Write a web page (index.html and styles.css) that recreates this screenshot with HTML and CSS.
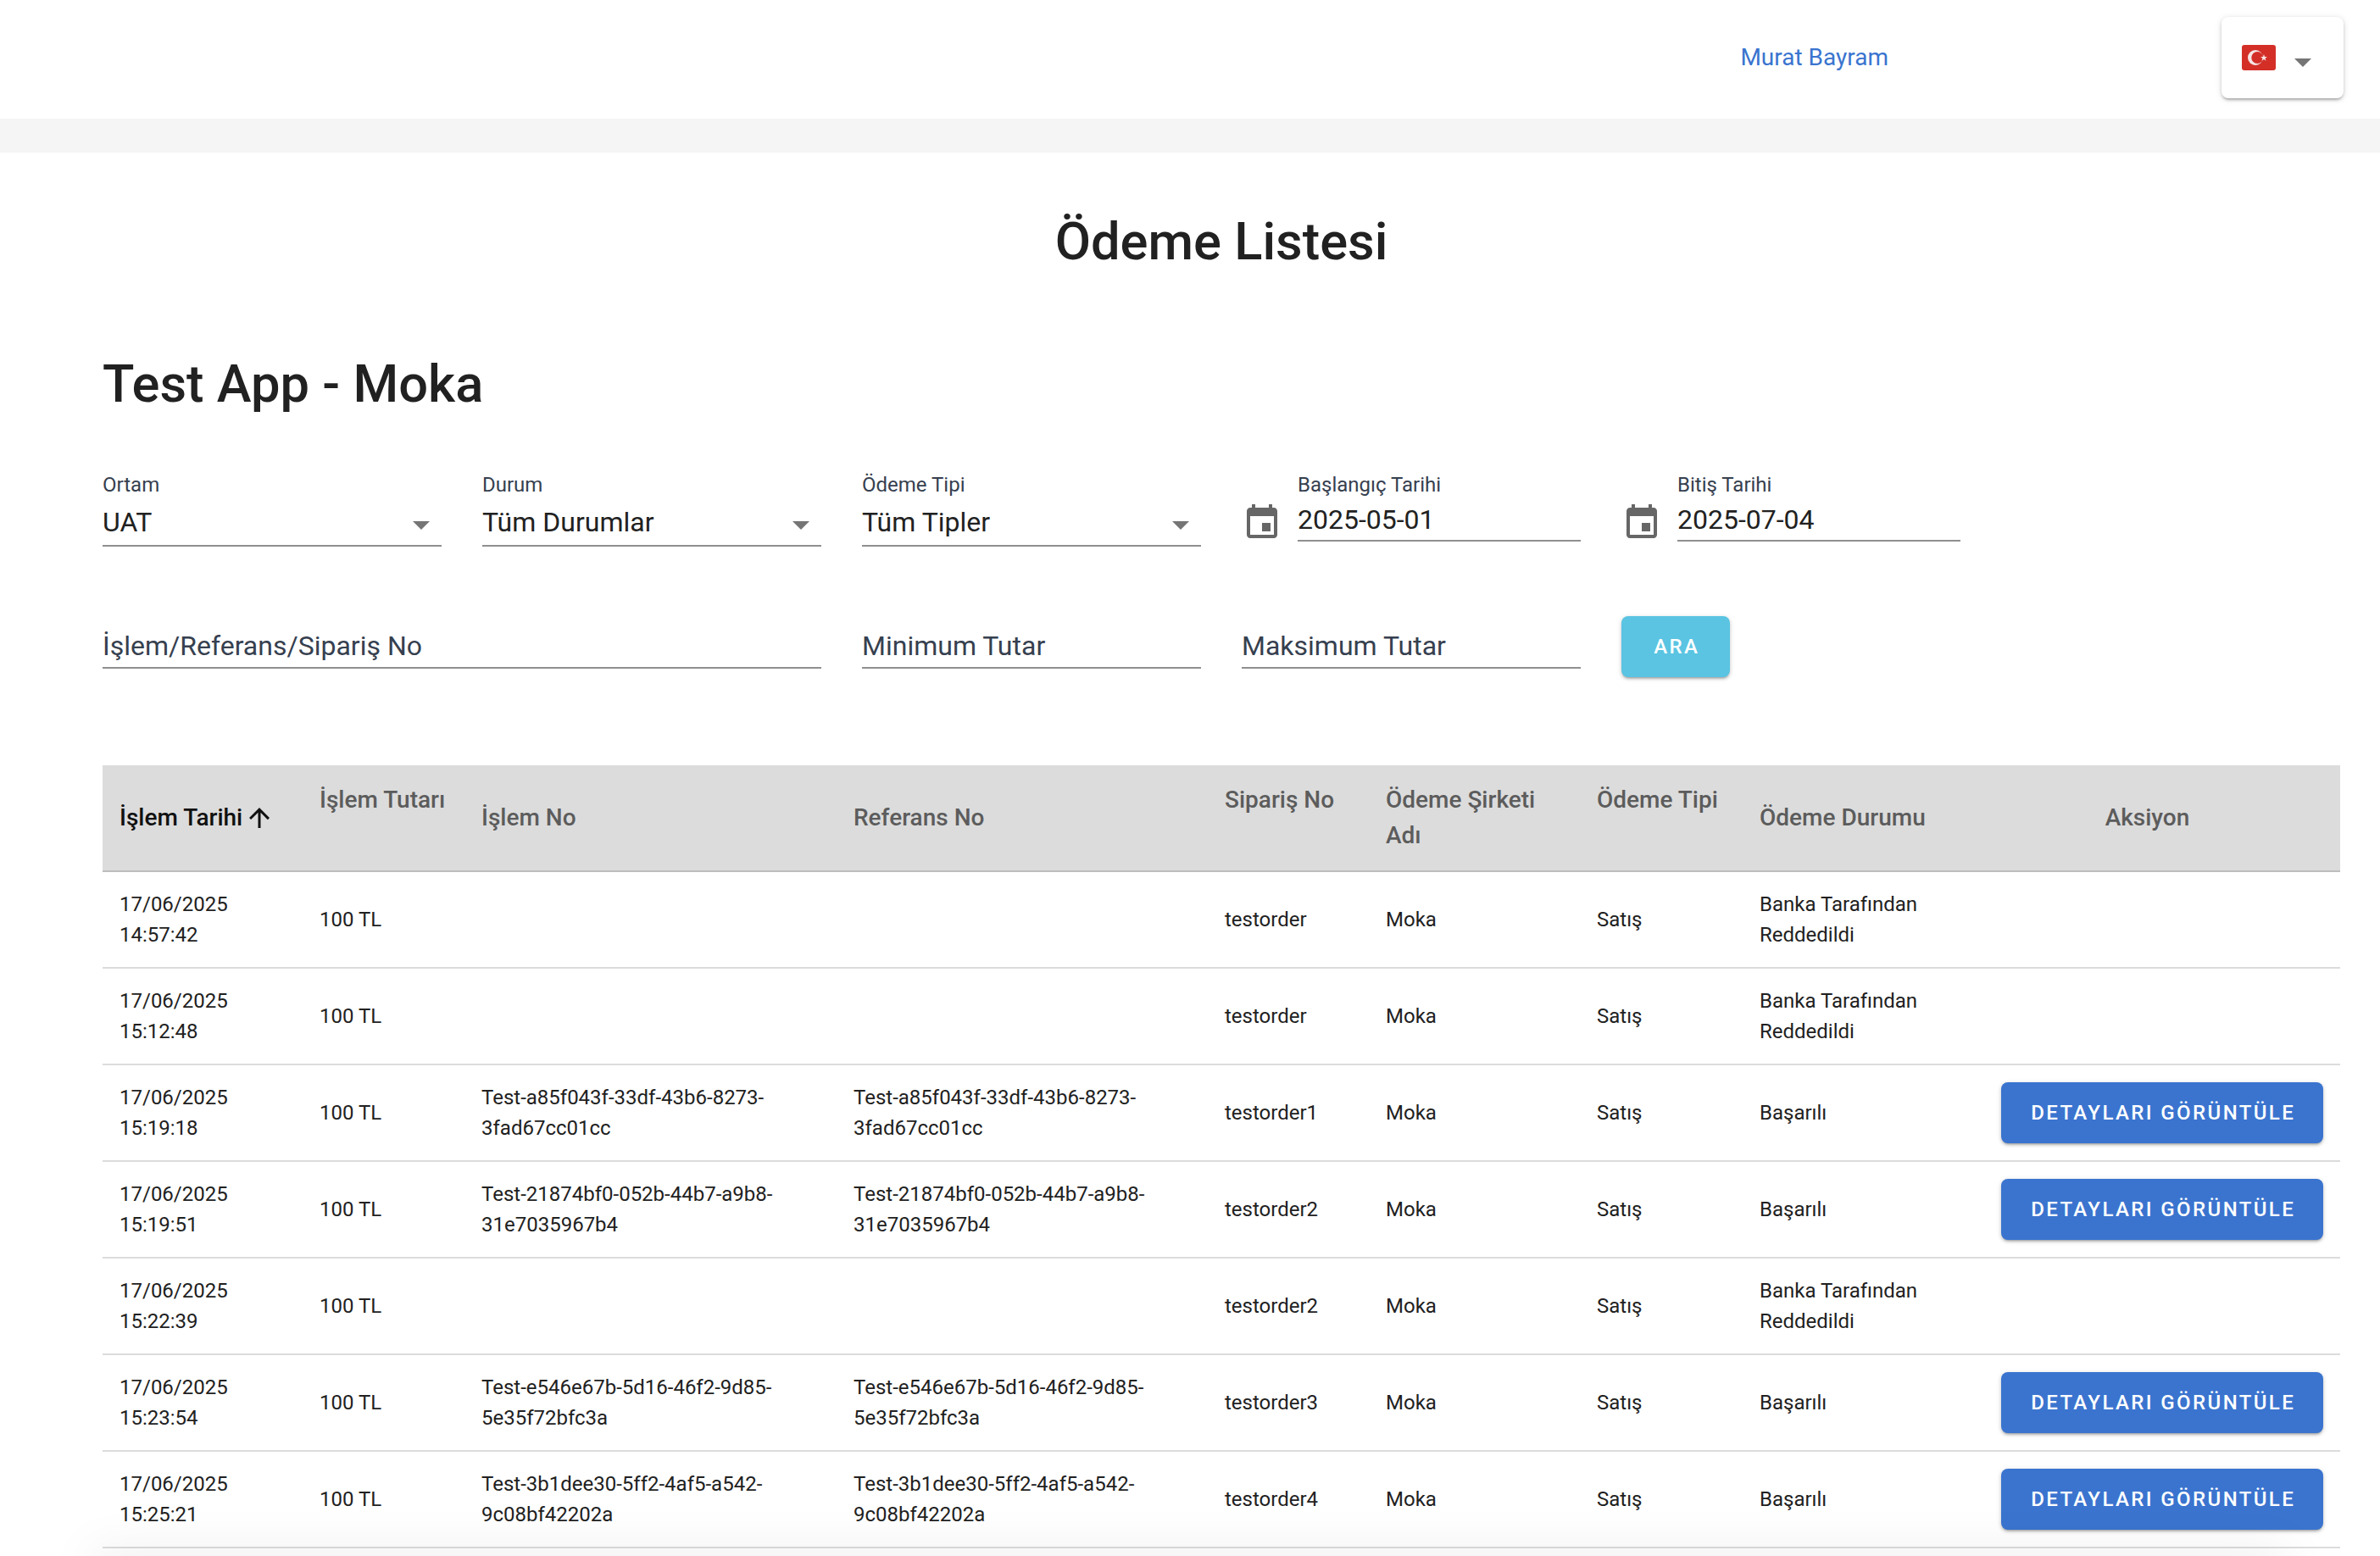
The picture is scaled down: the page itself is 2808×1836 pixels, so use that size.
FILE: index.html
```html
<!DOCTYPE html>
<html lang="tr">
<head>
<meta charset="utf-8">
<title>Ödeme Listesi</title>
<link rel="stylesheet" href="styles.css">
</head>
<body>
<header class="topbar">
  <a class="user-link" href="#">Murat Bayram</a>
  <div class="lang-select">
    <svg class="flag" viewBox="0 0 40 30" aria-hidden="true">
      <rect width="40" height="30" rx="3" fill="#d32f27"/>
      <circle cx="16" cy="15" r="9" fill="#f6e6e4"/>
      <circle cx="18.3" cy="15" r="7" fill="#d32f27"/>
      <polygon points="26,11 27,14 30,14 27.6,15.8 28.5,18.8 26,17 23.5,18.8 24.4,15.8 22,14 25,14" fill="#f6e6e4"/>
    </svg>
    <span class="caret"></span>
  </div>
</header>
<div class="band"></div>
<main class="content">
  <h1 class="page-title">Ödeme Listesi</h1>
  <h2 class="app-title">Test App - Moka</h2>
  <form class="filters">
    <div class="field select"><label>Ortam</label><div class="value">UAT<span class="caret"></span></div></div>
    <div class="field select"><label>Durum</label><div class="value">Tüm Durumlar<span class="caret"></span></div></div>
    <div class="field select"><label>Ödeme Tipi</label><div class="value">Tüm Tipler<span class="caret"></span></div></div>
    <div class="date-field">
      <svg class="cal" viewBox="0 0 24 24" aria-hidden="true"><path d="M17 12h-5v5h5v-5zM16 1v2H8V1H6v2H5c-1.11 0-1.99.9-1.99 2L3 19c0 1.1.89 2 2 2h14c1.1 0 2-.9 2-2V5c0-1.1-.9-2-2-2h-1V1h-2zm3 18H5V8h14v11z"/></svg>
      <div class="field date"><label>Başlangıç Tarihi</label><div class="value">2025-05-01</div></div>
    </div>
    <div class="date-field">
      <svg class="cal" viewBox="0 0 24 24" aria-hidden="true"><path d="M17 12h-5v5h5v-5zM16 1v2H8V1H6v2H5c-1.11 0-1.99.9-1.99 2L3 19c0 1.1.89 2 2 2h14c1.1 0 2-.9 2-2V5c0-1.1-.9-2-2-2h-1V1h-2zm3 18H5V8h14v11z"/></svg>
      <div class="field date"><label>Bitiş Tarihi</label><div class="value">2025-07-04</div></div>
    </div>
    <div class="field text wide"><div class="value placeholder">İşlem/Referans/Sipariş No</div></div>
    <div class="field text"><div class="value placeholder">Minimum Tutar</div></div>
    <div class="field text"><div class="value placeholder">Maksimum Tutar</div></div>
    <div class="search-cell"><button class="btn search" type="button">ARA</button></div>
  </form>
  <table class="grid">
    <colgroup>
      <col class="c1"><col class="c2"><col class="c3"><col class="c4"><col class="c5"><col class="c6"><col class="c7"><col class="c8"><col class="c9">
    </colgroup>
    <thead>
      <tr>
        <th class="sorted">İşlem Tarihi<svg class="arrow" viewBox="0 0 24 24" aria-hidden="true"><path d="M4 12l1.41 1.41L11 7.83V20h2V7.83l5.58 5.59L20 12l-8-8-8 8z"/></svg></th>
        <th class="top">İşlem Tutarı</th>
        <th>İşlem No</th>
        <th>Referans No</th>
        <th class="top">Sipariş No</th>
        <th class="top">Ödeme Şirketi Adı</th>
        <th class="top">Ödeme Tipi</th>
        <th>Ödeme Durumu</th>
        <th class="center">Aksiyon</th>
      </tr>
    </thead>
    <tbody>
      <tr><td>17/06/2025 14:57:42</td><td>100 TL</td><td></td><td></td><td>testorder</td><td>Moka</td><td>Satış</td><td>Banka Tarafından Reddedildi</td><td></td></tr>
      <tr><td>17/06/2025 15:12:48</td><td>100 TL</td><td></td><td></td><td>testorder</td><td>Moka</td><td>Satış</td><td>Banka Tarafından Reddedildi</td><td></td></tr>
      <tr><td>17/06/2025 15:19:18</td><td>100 TL</td><td>Test-a85f043f-33df-43b6-8273-3fad67cc01cc</td><td>Test-a85f043f-33df-43b6-8273-3fad67cc01cc</td><td>testorder1</td><td>Moka</td><td>Satış</td><td>Başarılı</td><td class="action"><button class="btn detail" type="button">DETAYLARI GÖRÜNTÜLE</button></td></tr>
      <tr><td>17/06/2025 15:19:51</td><td>100 TL</td><td>Test-21874bf0-052b-44b7-a9b8-31e7035967b4</td><td>Test-21874bf0-052b-44b7-a9b8-31e7035967b4</td><td>testorder2</td><td>Moka</td><td>Satış</td><td>Başarılı</td><td class="action"><button class="btn detail" type="button">DETAYLARI GÖRÜNTÜLE</button></td></tr>
      <tr><td>17/06/2025 15:22:39</td><td>100 TL</td><td></td><td></td><td>testorder2</td><td>Moka</td><td>Satış</td><td>Banka Tarafından Reddedildi</td><td></td></tr>
      <tr><td>17/06/2025 15:23:54</td><td>100 TL</td><td>Test-e546e67b-5d16-46f2-9d85-5e35f72bfc3a</td><td>Test-e546e67b-5d16-46f2-9d85-5e35f72bfc3a</td><td>testorder3</td><td>Moka</td><td>Satış</td><td>Başarılı</td><td class="action"><button class="btn detail" type="button">DETAYLARI GÖRÜNTÜLE</button></td></tr>
      <tr><td>17/06/2025 15:25:21</td><td>100 TL</td><td>Test-3b1dee30-5ff2-4af5-a542-9c08bf42202a</td><td>Test-3b1dee30-5ff2-4af5-a542-9c08bf42202a</td><td>testorder4</td><td>Moka</td><td>Satış</td><td>Başarılı</td><td class="action"><button class="btn detail" type="button">DETAYLARI GÖRÜNTÜLE</button></td></tr>
    </tbody>
  </table>
</main>
<div class="bottom-shade"></div>
</body>
</html>
```
FILE: styles.css
```css
* { box-sizing: border-box; }
html, body { height: 100%; }
body {
  margin: 0;
  height: 1836px;
  overflow: hidden;
  background: #fff;
  color: #212121;
  font-family: Roboto, "Noto Sans", sans-serif;
}
.topbar {
  height: 140px;
  display: flex;
  align-items: center;
  justify-content: flex-end;
  padding-right: 43px;
  gap: 393px;
}
.user-link {
  color: #3a74cf;
  font-size: 28px;
  margin-bottom: 5px;
  text-decoration: none;
}
.lang-select {
  width: 144px;
  height: 96px;
  margin-top: -4px;
  display: flex;
  align-items: center;
  padding-left: 24px;
  gap: 22px;
  background: #fff;
  border-radius: 8px;
  box-shadow: 0 3px 3px -2px rgba(0,0,0,.3), 0 2px 4px rgba(0,0,0,.14), 0 1px 8px rgba(0,0,0,.1);
}
.flag { width: 40px; height: 30px; }
.caret {
  display: inline-block;
  width: 0;
  height: 0;
  border-left: 10px solid transparent;
  border-right: 10px solid transparent;
  border-top: 10px solid #757575;
}
.lang-select .caret { margin-top: 12px; }
.band { height: 40px; background: #f5f5f5; }
.content { padding: 0 47px 0 121px; }
.page-title {
  margin: 0;
  padding-top: 70px;
  text-align: center;
  font-size: 61.44px;
  font-weight: 500;
  line-height: 70px;
  color: #212121;
}
.app-title {
  margin: 98px 0 0;
  font-size: 61.44px;
  font-weight: 500;
  line-height: 70px;
}
.filters {
  display: grid;
  grid-template-columns: repeat(5, 400px);
  column-gap: 48px;
  margin-top: 69px;
}
.field label {
  display: block;
  font-size: 24px;
  line-height: 30px;
  color: #36404f;
}
.value {
  font-size: 32px;
  line-height: 40px;
  color: #212121;
  border-bottom: 2px solid #8f8f8f;
}
.select { height: 170px; }
.select .value {
  position: relative;
  height: 49px;
  margin-top: 9px;
}
.select .caret {
  position: absolute;
  right: 14px;
  top: 19px;
}
.date-field {
  display: flex;
  gap: 18px;
}
.cal { width: 48px; height: 48px; margin-top: 36px; fill: #666; flex: none; }
.date { flex: 1; }
.date .value { height: 46px; margin-top: 6px; }
.field.text { align-self: end; margin-bottom: 10px; }
.wide { grid-column: span 2; }
.placeholder { color: #36404f; height: 47px; }
.search-cell { align-self: end; }
.btn {
  border: 0;
  border-radius: 8px;
  color: #fff;
  font-family: inherit;
  font-weight: 500;
  font-size: 24px;
  letter-spacing: 2.4px;
  padding: 0 0 0 2.4px;
  box-shadow: 0 3px 3px -2px rgba(0,0,0,.28), 0 2px 4px rgba(0,0,0,.14), 0 1px 6px rgba(0,0,0,.1);
}
.search { width: 128px; height: 72px; background: #5ac4e2; }
.grid {
  width: 2640px;
  margin-top: 104px;
  border-collapse: collapse;
  table-layout: fixed;
}
.c1 { width: 236px; }
.c2 { width: 191px; }
.c3 { width: 439px; }
.c4 { width: 438px; }
.c5 { width: 190px; }
.c6 { width: 249px; }
.c7 { width: 192px; }
.c8 { width: 284px; }
.c9 { width: 421px; }
th {
  background: #dcdcdc;
  border-bottom: 2px solid #bdbdbd;
  padding: 20px;
  text-align: left;
  font-size: 28px;
  font-weight: 500;
  line-height: 42px;
  color: #5c5c5c;
}
th.top { vertical-align: top; }
th.center { text-align: center; padding-right: 54px; }
th.sorted { color: #111; }
.arrow { width: 36px; height: 36px; margin-left: 2px; vertical-align: -9px; fill: #111; }
td {
  padding: 20px;
  border-bottom: 2px solid #dcdcdc;
  font-size: 24px;
  line-height: 36px;
  color: #212121;
}
td.action { padding: 0 20px 0 21px; }
.detail { width: 380px; height: 72px; background: #3a74cf; display: block; }
.bottom-shade {
  position: fixed;
  left: 110px;
  right: 110px;
  bottom: -30px;
  height: 30px;
  box-shadow: 0 0 60px rgba(0,0,0,.1);
}
```
